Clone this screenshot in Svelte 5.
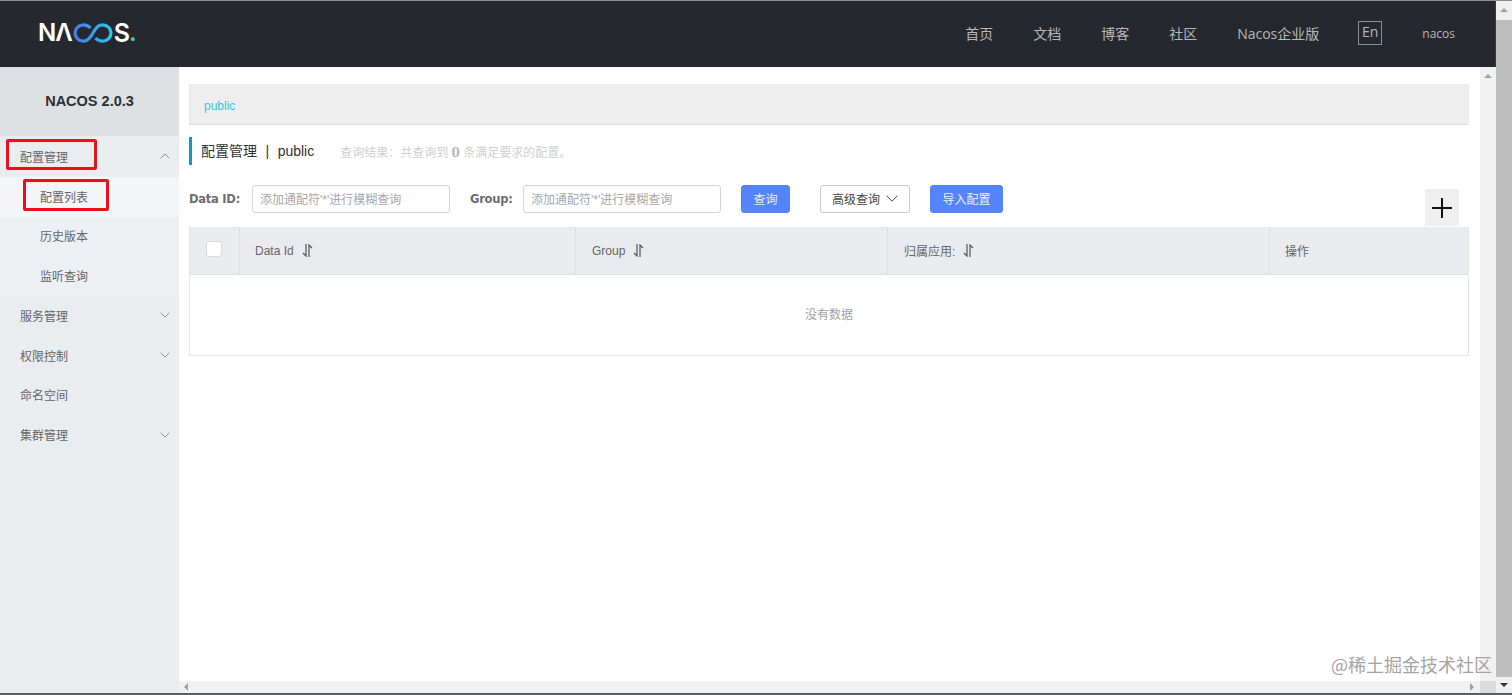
<script>
  const nav = ['首页', '文档', '博客', '社区', 'Nacos企业版'];
  const menu = [
    { label: '配置管理', open: true, icon: 'up' },
    { label: '配置列表', sub: true, active: true },
    { label: '历史版本', sub: true },
    { label: '监听查询', sub: true },
    { label: '服务管理', icon: 'down' },
    { label: '权限控制', icon: 'down' },
    { label: '命名空间' },
    { label: '集群管理', icon: 'down' }
  ];
  const cols = [
    { label: 'Data Id', cls: 'c1' },
    { label: 'Group', cls: 'c2' },
    { label: '归属应用:', cls: 'c3' }
  ];
</script>

<div class="screen">
  <div class="main">
    <header class="top">
      <div class="logo"><span class="na">NΛ</span><svg class="loop" viewBox="0 0 40 20" width="40" height="20" aria-hidden="true"><defs><linearGradient id="lg" x1="0" x2="1" y1="0" y2="0"><stop offset="0" stop-color="#3f7fe8"/><stop offset="1" stop-color="#2cc6e6"/></linearGradient></defs><path d="M17.500 5C15.500 2.800 13.500 1.800 10.500 1.800 6 1.800 2 5.500 2 10s4 8.200 8.500 8.200c3 0 5-1.400 8-5.700l3-5C23.500 4 25.500 1.800 29.500 1.800 34 1.800 38 5.500 38 10s-4 8.200-8.500 8.200c-3 0-5-1-7-3.200" fill="none" stroke="url(#lg)" stroke-width="3.200"/></svg><span class="s">S</span><span class="dot">.</span></div>
      <nav class="nav">
        {#each nav as item}<span>{item}</span>{/each}
      </nav>
      <span class="lang">En</span>
      <span class="user">nacos</span>
    </header>

    <div class="body">
      <aside class="side">
        <div class="ver">NACOS 2.0.3</div>
        <ul class="menu">
          {#each menu as m}
            <li class:sub={m.sub} class:open={m.open} class:active={m.active}>
              <span>{m.label}</span>
              {#if m.icon}
                <svg class="chev" class:flip={m.icon === 'up'} viewBox="0 0 10 6" width="10" height="6" aria-hidden="true"><path d="M.7.8 5 5 9.300.8" fill="none" stroke="#8b8f94" stroke-width="1"/></svg>
              {/if}
            </li>
          {/each}
        </ul>
        <div class="mark mark1"></div>
        <div class="mark mark2"></div>
      </aside>

      <div class="center">
        <div class="view">
          <main class="page">
            <div class="crumb"><span>public</span></div>
            <div class="title">
              <h1>配置管理<i>|</i>public</h1>
              <p>查询结果：共查询到 <b>0</b> 条满足要求的配置。</p>
            </div>
            <div class="filters">
              <label for="f1">Data ID:</label>
              <input id="f1" placeholder="添加通配符'*'进行模糊查询" />
              <label class="l2" for="f2">Group:</label>
              <input id="f2" placeholder="添加通配符'*'进行模糊查询" />
              <button class="pri q">查询</button>
              <button class="adv">高级查询<svg viewBox="0 0 12 7" width="12" height="7" aria-hidden="true"><path d="M.6.7 6 6.200 11.400.7" fill="none" stroke="#444" stroke-width="1"/></svg></button>
              <button class="pri imp">导入配置</button>
            </div>
            <div class="plus-row">
              <div class="plus"><svg viewBox="0 0 20 20" width="20" height="20" aria-hidden="true"><path d="M10 0v20M0 10h20" stroke="#111" stroke-width="2"/></svg></div>
            </div>
            <div class="table">
              <div class="thead">
                <div class="cell c0"><span class="check"></span></div>
                {#each cols as c}
                  <div class="cell {c.cls}">{c.label}
                    <svg class="sort" viewBox="0 0 11 13" width="11" height="13" aria-hidden="true"><path d="M4 0v12L1 9M7 13V1L10 4" fill="none" stroke="#555" stroke-width="1.200"/></svg>
                  </div>
                {/each}
                <div class="cell c4">操作</div>
              </div>
              <div class="empty">没有数据</div>
            </div>
          </main>
          <div class="vbar inner"><s class="up"></s></div>
        </div>
        <div class="hbar"><s class="left"></s><s class="right"></s><em></em></div>
      </div>
    </div>
  </div>
  <div class="vbar outer"><s class="up"></s><b></b><s class="dn"></s></div>
  <div class="wm">@稀土掘金技术社区</div>
</div>

<style>
  :global(body) { margin: 0; background: #fff; }
  .screen {
    position: relative; display: flex; width: 1512px; height: 695px; overflow: hidden;
    font-family: "Liberation Sans", "Noto Sans CJK SC", sans-serif; font-size: 12px; color: #666;
    box-sizing: border-box; border-top: 1px solid #8b8d8f; border-bottom: 2px solid #5a5c5e;
  }
  .main { flex: 1; min-width: 0; display: flex; flex-direction: column; }

  .top {
    height: 66px; flex: none; box-sizing: border-box; display: flex; align-items: center;
    background: #25292f; color: #b5b7b9; padding: 0 40px 2px 38px; border-right: 1px solid #3a3d40;
  }
  .logo {
    display: flex; align-items: center; font-family: Inter, "Liberation Sans", sans-serif;
    font-size: 24px; font-weight: 600; color: #fff; line-height: 1;
  }
  .na { letter-spacing: -1px; }
  .loop { margin: 0 0 0 1px; }
  .s { font-size: 25px; margin-left: 1px; }
  .dot { color: #2fd0d8; margin-left: -1px; }
  .nav { margin-left: auto; display: flex; gap: 40px; font-size: 14px; font-family: "Open Sans", "Noto Sans CJK SC", sans-serif; }
  .lang {
    margin-left: 39px; width: 24px; height: 24px; box-sizing: border-box; border: 1px solid #8a8d90;
    text-align: center; line-height: 20px; font-size: 14px; font-family: "Open Sans", sans-serif;
  }
  .user { margin-left: 40px; font-size: 12px; font-family: "Open Sans", sans-serif; }

  .body { flex: 1; min-height: 0; display: flex; }
  .side { position: relative; width: 179px; flex: none; background: #e9edf0; }
  .ver {
    height: 69px; box-sizing: border-box; padding-bottom: 2px; background: #dde1e4; display: flex; align-items: center; justify-content: center;
    font-size: 14.500px; font-weight: 700; color: #2c3034;
  }
  .menu { list-style: none; margin: 0; padding: 1px 0 0; }
  .menu li {
    height: 39.750px; display: flex; align-items: center; justify-content: space-between;
    padding: 0 9px 1px 20px; box-sizing: border-box; color: #666;
  }
  .menu li.sub { padding-left: 40px; background: #edf0f3; }
  .menu li.active { background: #f3f5f7; }
  .menu li.open { background: #eaedf0; }
  .flip { transform: rotate(180deg); }
  .mark { position: absolute; box-sizing: border-box; border: 3px solid #e8121f; border-radius: 2px; }
  .mark1 { left: 6px; top: 72px; width: 91px; height: 31px; }
  .mark2 { left: 23px; top: 112px; width: 86px; height: 32px; }

  .center { flex: 1; min-width: 0; display: flex; flex-direction: column; }
  .view { flex: 1; min-height: 0; display: flex; }
  .page { flex: 1; min-width: 0; padding: 17px 11px 0 10px; }
  .crumb {
    height: 41px; box-sizing: border-box; background: #eeeeee; border-bottom: 1px solid #dcdcdc;
    padding: 3px 14px 0; display: flex; align-items: center; color: #3cc4dc; border-left: 1px solid #e6e6e6;
  }
  .title {
    margin-top: 12px; height: 28px; border-left: 3px solid #0a9ac8; padding-left: 9px;
    display: flex; align-items: center; color: #d0d0d0;
  }
  h1 { margin: 0; font-size: 14px; font-weight: 400; color: #333; line-height: 1; }
  h1 i { font-style: normal; margin: 0 8.500px; }
  .title p { margin: 0 0 0 26px; font-size: 12px; }
  .title b { color: #b8b8b8; font-family: "DejaVu Serif", serif; }

  .filters { display: flex; align-items: center; margin-top: 20px; height: 28px; }
  label { font-weight: 700; color: #6b6f73; font-family: "DejaVu Sans", sans-serif; font-size: 11.500px; letter-spacing: -.25px; width: 63px; flex: none; }
  label.l2 { margin-left: 20px; width: 53px; }
  input {
    width: 198px; height: 28px; box-sizing: border-box; border: 1px solid #d3d5d7; border-radius: 3px;
    padding: 1px 7px 0; font: 12px "Liberation Sans", "Noto Sans CJK SC", sans-serif; color: #333; outline: none; background: #fff;
  }
  input::placeholder { color: #a8a8a8; opacity: 1; }
  button {
    height: 28px; box-sizing: border-box; border-radius: 3px; padding: 0 0 2px; cursor: pointer;
    font: 12px "Liberation Sans", "Noto Sans CJK SC", sans-serif;
  }
  .pri { background: #5584ff; border: 1px solid #5584ff; color: #e8eeff; }
  .q { margin-left: 20px; width: 49px; }
  .adv {
    margin-left: 30px; width: 90px; background: #fff; border: 1px solid #c8cacc; color: #444;
    display: flex; align-items: center; justify-content: center; gap: 6px;
  }
  .imp { margin-left: 20px; width: 73px; }

  .plus-row { display: flex; justify-content: flex-end; height: 14px; }
  .plus {
    width: 34px; height: 37px; margin: -24px 10px 0 0; flex: none; display: flex; align-items: center; justify-content: center;
    background: #efefef;
  }

  .table { border: 1px solid #e4e6e8; border-top: 0; }
  .thead { display: flex; height: 48px; background: #e9ebee; border-bottom: 1px solid #dfe1e3; box-sizing: border-box; }
  .cell {
    box-sizing: border-box; display: flex; align-items: center; gap: 8px; padding-left: 16px;
    border-left: 1px solid #dcdfe2; color: #666; font-size: 12px;
  }
  .c0 { width: 49px; border-left: 0; justify-content: center; padding: 0; }
  .c1 { width: 336px; padding-left: 15px; }
  .c2 { width: 312px; }
  .c3 { width: 382px; }
  .c4 { flex: 1; padding-left: 15px; }
  .check { width: 16px; height: 16px; background: #fff; border: 1px solid #d8dadc; border-radius: 3px; box-sizing: border-box; margin: 0 2px 3px 0; }
  .empty { height: 80px; box-sizing: border-box; padding-bottom: 3px; display: flex; align-items: center; justify-content: center; color: #a0a0a0; }

  .vbar { width: 16px; flex: none; background: #f1f1f1; position: relative; }
  .outer { background: #f0f0f0; display: flex; flex-direction: column; align-items: center; }
  .outer b { flex: 1; width: 16px; background: #bdbdbd; margin: 8px 0 0; }
  .up, .dn, .left, .right { display: block; width: 0; height: 0; border: 4px solid transparent; }
  .up { border-top: 0; border-bottom: 4px solid #a0a0a0; margin: 7px auto 0; }
  .dn { border-bottom: 0; border-top: 4px solid #333; margin: 6px auto; }
  .hbar {
    height: 12px; flex: none; background: #f1f1f1; display: flex; justify-content: space-between; align-items: center;
    padding: 0 0 0 5px;
  }
  .hbar em { width: 16px; height: 12px; background: #dcdcdc; margin-left: 6px; }
  .left { border-left: 0; border-right: 4px solid #a0a0a0; margin-right: auto; }
  .right { border-right: 0; border-left: 4px solid #a0a0a0; }

  .wm {
    position: absolute; right: 20px; bottom: 17px; font-size: 18px; color: #a4a4a4;
    font-family: "Noto Sans CJK SC", sans-serif; line-height: 24px;
  }
</style>
